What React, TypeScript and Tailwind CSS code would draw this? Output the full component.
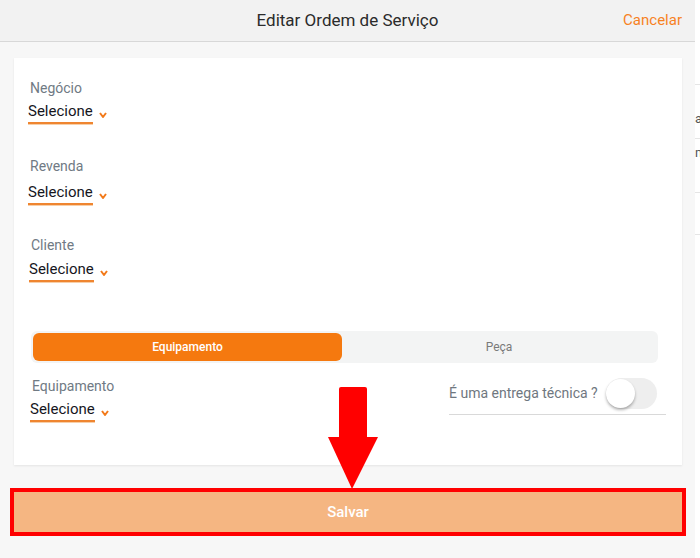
import React from 'react';

const font = { fontFamily: 'Roboto, "Noto Sans", sans-serif' };

function Chevron() {
  return (
    <svg width="8" height="6" viewBox="0 0 8 6" className="mt-[5px]">
      <polyline points="1,1 4,5 7,1" fill="none" stroke="#f27a1a" strokeWidth="2" strokeLinejoin="round" />
    </svg>
  );
}

function Select({ label, className = '', gap = 'mt-[3px]' }: { label: string; className?: string; gap?: string }) {
  return (
    <div className={className}>
      <p className="pl-[2px] text-[14px] leading-5 text-[#707a84]">{label}</p>
      <div className={`${gap} flex items-center gap-[6px]`}>
        <span className="border-b-2 border-[#ef8530] pb-[1px] text-[15px] leading-5 text-[#16161d] shadow-[0_1px_0_#f8cfa8]">
          Selecione
        </span>
        <Chevron />
      </div>
    </div>
  );
}

export default function App() {
  return (
    <div className="relative flex h-[558px] w-[700px] overflow-hidden bg-white" style={font}>
      <div className="flex w-[695px] shrink-0 flex-col bg-[#f7f7f7]">
        <header className="relative flex h-[42px] shrink-0 items-center justify-center border-b border-[#d8d8d8] bg-[#f2f2f2]">
          <h1 className="text-[17px] text-[#2b2b2b]">Editar Ordem de Serviço</h1>
          <button type="button" className="absolute right-[13px] text-[15px] text-[#f7821f]">
            Cancelar
          </button>
        </header>

        <div className="px-[14px] pr-[13px] pt-[16px]">
          <div className="h-[407px] bg-white pl-[14px] pr-[16px] pt-[20px] shadow-[0_1px_2px_rgba(0,0,0,0.08)]">
            <Select label="Negócio" />
            <Select label="Revenda" className="mt-[32px]" gap="mt-[6px]" />
            <Select label="Cliente" className="mt-[30px] pl-[1px]" gap="mt-[4px]" />

            <div className="ml-[3px] mr-[8px] mt-[49px] flex h-[32px] rounded-md bg-[#f3f4f4] p-[2px]">
              <div className="flex w-[309px] items-center justify-center rounded-md bg-[#f5790f] text-[12px] font-medium text-white">
                Equipamento
              </div>
              <div className="flex flex-1 items-center justify-center text-[12px] text-[#7a7a7a]">Peça</div>
            </div>

            <div className="mt-[13px] flex items-start justify-between">
              <Select label="Equipamento" className="pl-[2px]" />
              <div className="mt-[2px] flex w-[217px] items-center border-b border-[#d9d9d9] pb-[5px]">
                <span className="text-[14px] text-[#6f7780]">É uma entrega técnica ?</span>
                <div className="ml-[8px] flex h-[31px] w-[51px] items-center rounded-full bg-[#eeeeee]">
                  <div className="h-[29px] w-[29px] rounded-full bg-white shadow-[0_2px_3px_rgba(0,0,0,0.3)]" />
                </div>
              </div>
            </div>
          </div>
        </div>

        <div className="px-[14px] pr-[13px] pt-[27px]">
          <button
            type="button"
            className="h-[40px] w-full bg-[#f5b682] text-[15px] font-medium text-white outline-4 outline-[#ff0000]"
          >
            Salvar
          </button>
        </div>
      </div>

      <div className="flex flex-1 flex-col pt-[84px] text-[13px] text-[#555]">
        <div className="h-[54px] border-t border-[#e5e5e5] pt-[24px]">a</div>
        <div className="h-[54px] border-t border-[#e5e5e5] pt-[4px]">m</div>
        <div className="h-[42px] border-t border-[#e5e5e5]" />
        <div className="border-t border-[#e5e5e5]" />
      </div>

      <svg className="pointer-events-none absolute left-0 top-0" width="700" height="558">
        <rect x="339" y="387" width="28" height="52" rx="2" fill="#ff0000" />
        <polygon points="328,437 378,437 352,489" fill="#ff0000" />
      </svg>
    </div>
  );
}
